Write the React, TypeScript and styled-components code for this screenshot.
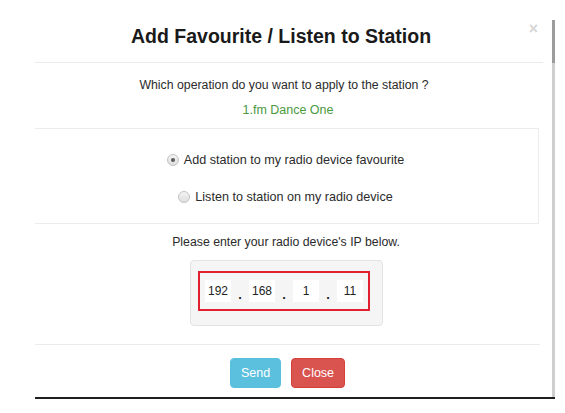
import React from 'react'
import styled, { createGlobalStyle } from 'styled-components'

const GlobalStyle = createGlobalStyle`
	html, body {
		margin: 0;
		padding: 0;
		background: #ffffff;
	}
	body {
		font-family: 'Liberation Sans', Arial, Helvetica, sans-serif;
		color: #333333;
	}
`

const ipParts = ['192', '168', '1', '11']

const options = [
	{ label: 'Add station to my radio device favourite', checked: true },
	{ label: 'Listen to station on my radio device', checked: false },
]

const Radio = ({ label, checked }: { label: string; checked: boolean }) => (
	<RadioRow>
		<RadioDot $checked={checked} />
		<RadioLabel>{label}</RadioLabel>
	</RadioRow>
)

const App = () => (
	<>
		<GlobalStyle />
		<Page>
			<Frame>
				<Modal>
					<Header>
						<Title>Add Favourite / Listen to Station</Title>
						<CloseX>×</CloseX>
					</Header>
					<Body>
						<Question>Which operation do you want to apply to the station ?</Question>
						<StationName>1.fm Dance One</StationName>
						<Options>
							{options.map((o) => (
								<Radio key={o.label} label={o.label} checked={o.checked} />
							))}
						</Options>
						<Prompt>Please enter your radio device's IP below.</Prompt>
						<Well>
							<IpBox>
								{ipParts.map((p, i) => (
									<React.Fragment key={i}>
										{i > 0 && <Dot>.</Dot>}
										<IpInput defaultValue={p} />
									</React.Fragment>
								))}
							</IpBox>
						</Well>
					</Body>
					<Footer>
						<Button $variant="info">Send</Button>
						<Button $variant="danger">Close</Button>
					</Footer>
				</Modal>
				<ScrollTrack>
					<ScrollThumb />
				</ScrollTrack>
			</Frame>
		</Page>
	</>
)

const Page = styled.div`
	width: 565px;
	height: 413px;
	padding-top: 20px;
	box-sizing: border-box;
	overflow: hidden;
`

const Frame = styled.div`
	display: flex;
	align-items: stretch;
	gap: 9px;
	margin-left: 35px;
	width: 520px;
	border-bottom: 2px solid #1f1f1f;
`

const Modal = styled.div`
	display: flex;
	flex-direction: column;
	width: 508px;
`

const Header = styled.div`
	position: relative;
	padding: 4px 0 14px;
	border-bottom: 1px solid #ebebeb;
	text-align: center;
`

const Title = styled.h4`
	margin: 0;
	padding-right: 16px;
	font-size: 19.5px;
	line-height: 24px;
	font-weight: bold;
	color: #1a1a1a;
`

const CloseX = styled.span`
	position: absolute;
	top: 0;
	right: 5px;
	font-size: 16px;
	line-height: 18px;
	font-weight: bold;
	color: #d6d6d6;
`

const Body = styled.div`
	display: flex;
	flex-direction: column;
	align-items: center;
	font-size: 12.3px;
`

const Question = styled.p`
	margin: 12px 0 0;
	padding-right: 10px;
	line-height: 20px;
	color: #2b2b2b;
`

const StationName = styled.p`
	margin: 5px 0 0;
	padding-right: 2px;
	line-height: 20px;
	font-size: 12.5px;
	color: #4a9a3e;
`

const Options = styled.div`
	align-self: stretch;
	display: flex;
	flex-direction: column;
	align-items: center;
	gap: 17px;
	margin: 8px 4px 0 0;
	padding: 21px 0 16px;
	border: 1px solid #ececec;
	border-left: none;
`

const RadioRow = styled.label`
	display: flex;
	align-items: center;
	gap: 5px;
	line-height: 20px;
	font-size: 12.6px;
	padding-right: 2px;
`

const RadioDot = styled.span<{ $checked: boolean }>`
	position: relative;
	width: 10px;
	height: 10px;
	border-radius: 50%;
	border: 1px solid #c2c2c2;
	background: linear-gradient(#f4f4f4, #dedede);
	&::after {
		content: '';
		display: ${(p) => (p.$checked ? 'block' : 'none')};
		position: absolute;
		left: 3px;
		top: 3px;
		width: 4px;
		height: 4px;
		border-radius: 50%;
		background: #5a5a5a;
	}
`

const RadioLabel = styled.span`
	color: #2b2b2b;
`

const Prompt = styled.p`
	margin: 8px 0 0;
	padding-right: 6px;
	line-height: 20px;
	color: #2b2b2b;
`

const Well = styled.div`
	display: flex;
	margin: 8px 0 0 -5px;
	padding: 10px 12px 14px 7px;
	background: #f5f5f5;
	border: 1px solid #e3e3e3;
	border-radius: 4px;
`

const IpBox = styled.div`
	display: flex;
	align-items: center;
	justify-content: center;
	width: 168px;
	height: 36px;
	border: 2px solid #e0202f;
`

const IpInput = styled.input`
	width: 26px;
	height: 22px;
	padding: 0;
	border: none;
	outline: none;
	background: #ffffff;
	text-align: center;
	font-family: 'Liberation Sans', Arial, sans-serif;
	font-size: 12px;
	color: #222222;
`

const Dot = styled.span`
	width: 18px;
	text-align: center;
	font-size: 13px;
	font-weight: bold;
	line-height: 13px;
	padding-top: 6px;
	color: #222222;
`

const Footer = styled.div`
	display: flex;
	justify-content: center;
	gap: 10px;
	margin: 18px 3px 0 0;
	padding: 13px 0 9px;
	border-top: 1px solid #ebebeb;
`

const Button = styled.button<{ $variant: 'info' | 'danger' }>`
	height: 30px;
	padding: 0 10px;
	border: 1px solid ${(p) => (p.$variant === 'info' ? '#5bc0de' : '#d43f3a')};
	border-radius: 4px;
	background: ${(p) => (p.$variant === 'info' ? '#5bc0de' : '#d9534f')};
	color: #ffffff;
	font-family: 'Liberation Sans', Arial, sans-serif;
	font-size: 12.5px;
`

const ScrollTrack = styled.div`
	width: 3px;
	background: #cfcfcf;
`

const ScrollThumb = styled.div`
	height: 43px;
	background: #9c9c9c;
`

export default App
